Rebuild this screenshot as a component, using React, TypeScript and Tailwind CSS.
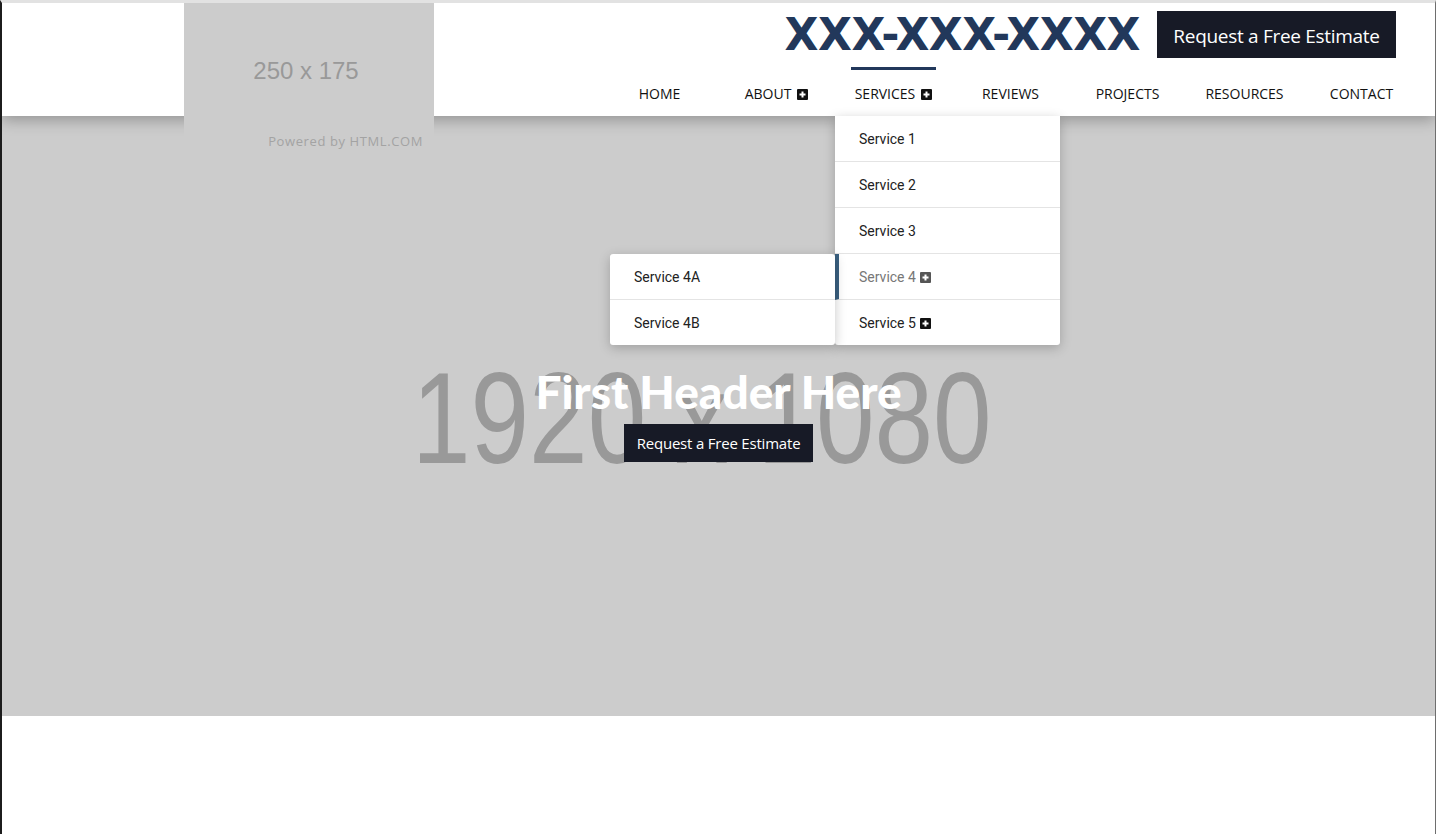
import React from 'react';

const navItems = [
  { label: 'HOME', plus: false },
  { label: 'ABOUT', plus: true },
  { label: 'SERVICES', plus: true, active: true },
  { label: 'REVIEWS', plus: false },
  { label: 'PROJECTS', plus: false },
  { label: 'RESOURCES', plus: false },
  { label: 'CONTACT', plus: false },
];

function PlusBox({ className = '' }: { className?: string }) {
  return (
    <svg viewBox="0 0 11 11" className={className} aria-hidden="true">
      <rect x="0" y="0" width="11" height="11" rx="1" fill="currentColor" />
      <path d="M5.5 2.5v6M2.5 5.5h6" stroke="#fff" strokeWidth="2" />
    </svg>
  );
}

function ServicesMenu() {
  return (
    <div className="absolute left-0 top-full w-[225px] bg-white rounded-b-[3px] shadow-[0_3px_12px_rgba(0,0,0,0.22)] z-30 font-['Roboto',sans-serif] text-[14px] text-[#222]">
      <div className="h-[46px] flex items-center pl-[24px] pt-[2px] border-b border-[#e4e4e4]">Service 1</div>
      <div className="h-[46px] flex items-center pl-[24px] pt-[2px] border-b border-[#e4e4e4]">Service 2</div>
      <div className="h-[46px] flex items-center pl-[24px] pt-[2px] border-b border-[#e4e4e4]">Service 3</div>
      <div className="relative h-[46px] flex items-center pl-[20px] pt-[2px] border-l-4 border-l-[#3a6080] border-b border-b-[#e4e4e4] text-[#777]">
        <span>Service 4</span>
        <PlusBox className="w-[11px] h-[11px] ml-[4px] text-[#555]" />
        <div className="absolute right-[calc(100%+4px)] top-0 w-[225px] bg-white rounded-[3px] shadow-[0_3px_12px_rgba(0,0,0,0.22)] text-[#222]">
          <div className="h-[46px] flex items-center pl-[24px] pt-[2px] border-b border-[#e4e4e4]">Service 4A</div>
          <div className="h-[45px] flex items-center pl-[24px] pt-[2px]">Service 4B</div>
        </div>
      </div>
      <div className="h-[45px] flex items-center pl-[24px] pt-[2px]">
        <span>Service 5</span>
        <PlusBox className="w-[11px] h-[11px] ml-[4px] text-[#111]" />
      </div>
    </div>
  );
}

export default function App() {
  return (
    <div className="min-h-[834px] bg-white border-t-[3px] border-t-[#e2e2e2] border-l-2 border-l-[#1c1c1c] border-r border-r-[#6e6e6e] overflow-hidden">
      {/* header */}
      <div className="relative z-20 h-[113px] bg-white shadow-[0_4px_14px_rgba(0,0,0,0.28)] flex">
        <div className="ml-[182px] w-[250px] h-[175px] shrink-0 bg-[#cccccc] flex flex-col relative z-10">
          <div className="pt-[53px] text-center font-['Liberation_Sans',Arial,sans-serif] text-[24px] leading-[30px] text-[#999999] pr-[6px]">
            250 x 175
          </div>
          <div className="mt-[46px] text-right pr-[11px] font-['Open_Sans',sans-serif] text-[13px] tracking-[0.6px] text-[#a3a3a3]">
            Powered by HTML.COM
          </div>
        </div>

        <div className="ml-auto mr-[15px] flex flex-col items-end">
          <div className="flex items-center pt-[8px] pr-[24px]">
            <span className="font-['DejaVu_Sans',sans-serif] font-bold text-[44px] leading-none tracking-[-0.5px] text-[#22385b]">
              XXX-XXX-XXXX
            </span>
            <a className="ml-[17px] h-[47px] w-[239px] bg-[#171a26] text-white flex items-center justify-center pt-[3px] font-['Open_Sans',sans-serif] text-[19px] tracking-[-0.3px]">
              Request a Free Estimate
            </a>
          </div>
          <nav className="flex mt-[9px] h-[49px]">
            {navItems.map((item) => (
              <div key={item.label} className="relative w-[117px] flex justify-center">
                <div
                  className={`h-[49px] px-[4px] pt-[14px] border-t-[3px] flex items-start ${
                    item.active ? 'border-t-[#22385b]' : 'border-t-transparent'
                  }`}
                >
                  <span className="font-['Open_Sans',sans-serif] text-[14px] leading-[20px] text-[#111] flex items-center">
                    {item.label}
                    {item.plus && <PlusBox className="w-[11px] h-[11px] ml-[6px] text-[#111]" />}
                  </span>
                </div>
                {item.active && <ServicesMenu />}
              </div>
            ))}
          </nav>
        </div>
      </div>

      {/* hero */}
      <div className="relative h-[600px] bg-[#cccccc] flex flex-col items-center justify-center">
        <div className="absolute inset-0 flex items-center justify-center pr-[34px] pt-[4px]">
          <span className="font-['Liberation_Sans',Arial,sans-serif] text-[130px] leading-none text-[#999999] scale-x-[0.81] whitespace-nowrap">
            1920 x 1080
          </span>
        </div>
        <div className="relative flex flex-col items-center -mt-[4px]">
          <h1 className="font-['Lato',sans-serif] font-black text-[46px] leading-[52px] text-white">First Header Here</h1>
          <a className="mt-[6px] h-[38px] px-[13px] bg-[#171a26] text-white flex items-center font-['Open_Sans',sans-serif] text-[15px] tracking-[-0.2px]">
            Request a Free Estimate
          </a>
        </div>
      </div>

      <div className="h-[118px] bg-white" />
    </div>
  );
}
